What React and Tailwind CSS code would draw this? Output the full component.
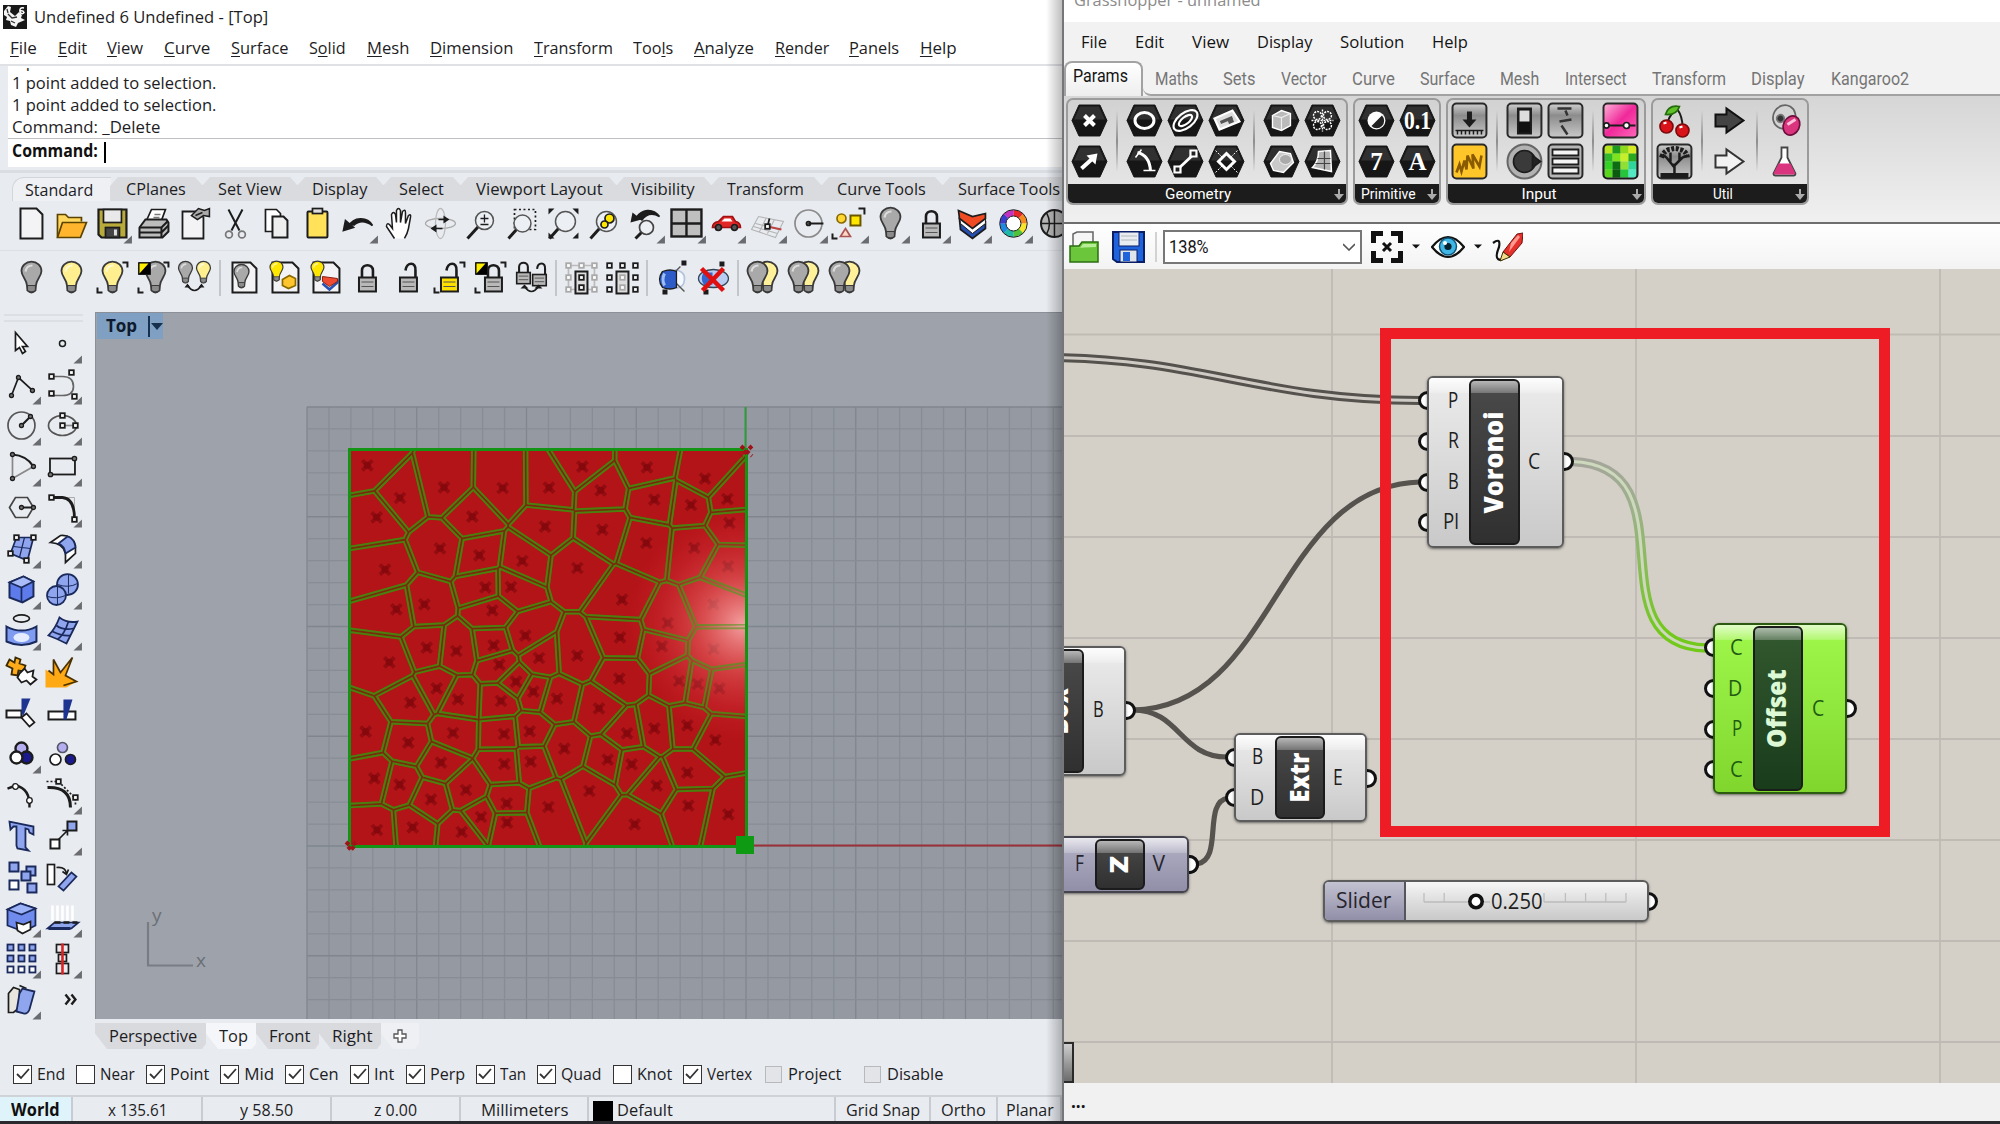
import React, { useLayoutEffect, useRef, useState } from "react";

/* Text squeezed or stretched horizontally to a given width. */
function Fit({ w, children, className = "" }) {
  const ref = useRef(null);
  const [s, setS] = useState(1);
  useLayoutEffect(() => {
    if (ref.current) setS(w / ref.current.offsetWidth);
  }, [w]);
  return (
    <span className={"inline-block shrink-0 whitespace-nowrap " + className} style={{ width: w }}>
      <span ref={ref} className="inline-block origin-left" style={{ transform: `scaleX(${s})` }}>
        {children}
      </span>
    </span>
  );
}

const K = "#1c1c1c";

function Ic({ tri, children }) {
  return (
    <svg viewBox="-20.5 -20.5 41 41" className="h-[41px] w-[40.95px] shrink-0" fill="none" stroke={K} strokeWidth="1.7">
      {children}
      {tri && <path d="M19.500 12v8h-8.500z" fill="#6a6c70" stroke="none" />}
    </svg>
  );
}

/* ---------- glyph pieces ---------- */
const Bulb = ({ x = 0, y = 0, c = "#a9a9a9", s = 1 }) => (
  <g transform={`translate(${x} ${y}) scale(${s})`}>
    <path d="M-4.500 8C-4.500 2-10-1-10-6.500A10 9.500 0 0 1 10-6.500C10-1 4.500 2 4.500 8L4 13Q0 17-4 13Z" fill={c} stroke="#3a3a3a" strokeWidth="1.8" />
    <path d="M-6-6Q-5-12 1-12" stroke="#fff" strokeWidth="2.200" opacity=".6" />
    <path d="M-4 8H4V13Q0 16-4 13Z" fill="#8b8b8b" stroke="#3a3a3a" strokeWidth="1.200" />
  </g>
);
const Lock = ({ x = 0, y = 0, c = "#b9b9b9", open, s = 1 }) => (
  <g transform={`translate(${x} ${y}) scale(${s})`}>
    <path d={open ? "M-3-7C-2-16 8-16 7-7V0" : "M-5.500 1V-7C-5.500-14 5.500-14 5.500-7V1"} strokeWidth="2.600" />
    <rect x="-8.500" y="0" width="17" height="14" fill={c} strokeWidth="2" />
    <path d="M-6 4.500H6M-6 9H6" stroke="#555" strokeWidth="1.200" />
  </g>
);
const Corners = () => <path d="M10-15h5v5M-15 10v5h5" strokeWidth="2" />;
const BW = ({ x, y }) => (
  <g transform={`translate(${x} ${y})`}>
    <path d="M-6-6h12v12h-12z" fill="#000" strokeWidth="1" />
    <path d="M-5-5h9L-5 5z" fill="#ffee00" stroke="none" />
  </g>
);
const Sq = ({ x, y, f = "#fff", r = 2.300, s = K }) => (
  <rect x={x - r} y={y - r} width={r * 2} height={r * 2} fill={f} stroke={s} strokeWidth="1.800" />
);
const Dot = ({ x, y, f = "#777", r = 2 }) => <circle cx={x} cy={y} r={r} fill={f} strokeWidth="1.300" />;
const Page = ({ w = 11, h = 15 }) => (
  <path d={`M${-w}${-h}H${w - 6}L${w}${-h + 6}V${h}H${-w}Z`} fill="#f3f3f5" strokeWidth="2" />
);
const Glass = ({ x = 3, y = -3, f = "#eceff3", r = 9 }) => (
  <g>
    <path d={`M${x - r * 0.7} ${y + r * 0.7}L-14 15`} strokeWidth="3" />
    <circle cx={x} cy={y} r={r} fill={f} stroke="#555" strokeWidth="1.500" />
  </g>
);
const BulbPair = () => (
  <g>
    <Bulb x={5} c="#fff19a" />
    <Bulb x={-5} />
  </g>
);

const rowOne = [
  [0, <Page />],
  [0, <g><path d="M-14 14V-9h8l3 3h13v4" fill="#ffd75e" stroke="#5a4300" /><path d="M-14 14L-9-1H15L9 14Z" fill="#ffb62e" stroke="#5a4300" /></g>],
  [1, <g><path d="M-14-14H14V14H-11L-14 11Z" fill="#b9aa3c" strokeWidth="2.200" /><rect x="-9" y="-14" width="18" height="13" fill="#e9e9e9" /><rect x="-7" y="4" width="14" height="10" fill="#444" /><path d="M3 6v6" stroke="#ddd" strokeWidth="3" /></g>],
  [0, <g><path d="M-7-3L-2-14H12L8-3" fill="#fff" /><path d="M1-9h6M0-6h6" stroke="#777" /><path d="M-14 4L-8-4H13L15-1V8L9 14H-14Z" fill="#bcbcbc" strokeWidth="2" /><path d="M-14 4H8L14-2M-14 9H8L15 2M8 4V14" strokeWidth="2" /></g>],
  [0, <g><path d="M-12-12H4L9-6V15H-12Z" fill="#f3f3f5" strokeWidth="1.800" /><path d="M-3-8L4-15L10-13L15-15V-7L9-8L3-4Z" fill="#aaa" strokeWidth="1.500" /><path d="M1-8L8-11" strokeWidth="1.500" /></g>],
  [0, <g><path d="M-7-14L4 7M7-14L-4 7" strokeWidth="2" /><circle cx="-6.500" cy="11" r="3.400" stroke="#777" /><circle cx="6.500" cy="11" r="3.400" stroke="#777" /></g>],
  [0, <g><path d="M-11-14H0L4-10V8H-11Z" fill="#fff" /><path d="M-4-7H7L11-3V14H-4Z" fill="#eee" strokeWidth="2" /></g>],
  [0, <g><rect x="-10" y="-12" width="20" height="26" rx="1" fill="#ffe25a" strokeWidth="2" /><rect x="-5" y="-15" width="10" height="5" fill="#ddd" /></g>],
  [1, <g><path d="M-10 3C-5-7 9-7 14 2C7-3 0-3-5 2" fill={K} /><path d="M-15 7L-13-3L-5 4Z" fill={K} /></g>],
  [0, <path d="M-5 15L-13 3Q-13-1-10 1L-7 5L-8-9Q-6-13-4-9L-3-1L-3-13Q-1-17 1-13L1-1L3-12Q6-15 6-11L6 0L9-8Q12-10 11-6L9 5Q8 10 5 15" fill="#fff" strokeWidth="1.500" />],
  [0, <g><ellipse rx="15" ry="5" stroke="#aaa" strokeWidth="1.300" /><ellipse rx="5" ry="15" stroke="#bbb" strokeWidth="1.300" /><path d="M-6 5h8M-2-4h6" strokeWidth="1.500" /><path d="M3-8L9-4L3 0ZM-4 1L-4 9L-10 5Z" fill={K} stroke="none" /></g>],
  [0, <g><Glass /><path d="M-1-5H7M3-9V-1M-1 1H7" strokeWidth="1.300" /></g>],
  [0, <g><rect x="-8" y="-14" width="21" height="20" strokeDasharray="2 2.500" /><Glass x={0} y={0} r={8.500} /></g>],
  [0, <g><Glass x={2} y={-2} r={10} /><path d="M-15-15h6l-6 6zM15-15v6l-6-6zM15 15h-6l6-6zM-15 15v-6l6 6z" fill={K} stroke="none" /></g>],
  [0, <g><Glass x={2} y={-2} r={10} /><circle cx="5" cy="-5" r="4.500" fill="#ffe600" /><circle cx="0" cy="1" r="3.500" fill="#ffe600" /></g>],
  [1, <g><path d="M-9-6C-4-14 7-16 14-7C7-11 1-10-4-3" fill={K} /><path d="M-15-1L-13-11L-4-4Z" fill={K} stroke="none" /><path d="M-4 9L-10 15" strokeWidth="3" /><circle cx="1" cy="4" r="7" fill="#eceff3" stroke="#444" /></g>],
  [1, <g><rect x="-15" y="-14" width="30" height="27" fill="#bfbfbf" strokeWidth="2.400" /><path d="M0-14V13M-15 0H15" strokeWidth="2.400" /></g>],
  [1, <g><path d="M-14 4Q-14-1-8-2L-3-7H6L9-2Q14-1 14 4Z" fill="#e32727" stroke="#a01010" /><path d="M-2-5H4L6-2H-5Z" fill="#fff" stroke="none" /><circle cx="-8" cy="4" r="3" fill="#555" /><circle cx="8" cy="4" r="3" fill="#555" /></g>],
  [1, <g><path d="M-16 6L-9-7L16-2L8 14ZM-8 8L-1-6M0 10L7-4M-12 0L12 6M-14 3L10 10" stroke="#b4b4b4" strokeWidth="1.100" /><path d="M0 3L14 6" stroke="#b44" strokeWidth="2" /><path d="M0 3L2-5" /><Sq x={0} y={3} /></g>],
  [1, <g><circle r="13.500" stroke="#8a8a8a" /><circle r="2" fill="#777" /><path d="M0 0H15" strokeWidth="2" /></g>],
  [1, <g><circle cx="-8" cy="-5" r="4.500" fill="#ffd633" stroke="#8a6a00" /><rect x="1" y="-8" width="10" height="10" fill="#ffe600" stroke="#6b5600" strokeWidth="2" /><path d="M-4 5L1 13H-9Z" fill="#ffd9c8" stroke="#a55" /><path d="M9-15h6v6M-17 10v5h5" strokeWidth="2" /></g>],
  [1, <Bulb />],
  [1, <Lock />],
  [1, <g><path d="M-13-4L0 9L13-1V5L0 15L-12 6Z" fill="#254fb0" /><path d="M-13-8L0 4L13-5V0L0 10L-12 0Z" fill="#fff" strokeWidth="1" /><path d="M-14-13L0-7L13-10V-5L0 5L-13-5Z" fill="#ef4a22" /></g>],
  [1, "wheel"],
  [0, <g><circle r="13.500" fill="#b5b5b5" strokeWidth="2" /><path d="M0-13V13M-13 0H13M-8-11Q-2 0-8 11" strokeWidth="1.500" /></g>],
];

const wheelColors = ["#e8262a", "#f58a1f", "#f7e52b", "#4fc13a", "#22b8a6", "#2188e0", "#3b3fd0", "#c331c0"];
const Wheel = () => (
  <g>
    {wheelColors.map((c, i) => (
      <circle key={c} r="10.500" stroke={c} strokeWidth="6" pathLength="8" strokeDasharray="1.02 6.980" transform={`rotate(${i * 45 - 90})`} />
    ))}
    <circle r="13.800" strokeWidth="1" />
    <circle r="7.500" fill="#fff" strokeWidth="1" />
  </g>
);

const rowTwo = [
  [
    <Bulb />,
    <Bulb c="#ffef8e" />,
    <g><Bulb c="#ffef8e" /><Corners /></g>,
    <g><Bulb x={2} /><BW x={-9} y={-9} /><Corners /></g>,
    <g><Bulb x={-9} y={-5} s={0.7} /><Bulb x={9} y={-5} s={0.7} c="#ffef8e" /><path d="M-7 8Q0 18 7 8" /><path d="M-10 10l3-4l3 4zM4 10l3-4l3 4z" fill={K} stroke="none" /></g>,
  ],
  [
    <g><Page w={12} /><Bulb x={-3} y={-1} s={0.75} /></g>,
    <g><Page w={13} /><Bulb x={-9} y={-6} s={0.65} c="#ffe600" /><path d="M-3 2L4-2L10 1V8L3 11L-3 8Z" fill="#ffc52e" stroke="#8a6a00" /></g>,
    <g><Page w={13} /><Bulb x={-9} y={-6} s={0.65} c="#ffe600" /><path d="M-4 6L3 12L11 5L11 2" stroke="#254fb0" strokeWidth="2.500" /><path d="M-4-1L11 1V4L3 9L-4 4Z" fill="#ef4a32" stroke="#8a2010" strokeWidth="1" /></g>,
    <Lock />,
    <Lock open />,
    <g><Lock open c="#ffe100" /><Corners /></g>,
    <g><Lock x={3} /><BW x={-9} y={-9} /><Corners /></g>,
    <g><Lock x={-8} y={-5} s={0.8} /><Lock x={8} y={-3} s={0.8} open /><path d="M-7 9Q0 19 7 9" /><path d="M-11 11l4-4l4 4zM3 11l4-4l4 4z" fill={K} stroke="none" /></g>,
  ],
  [
    <g><path d="M-13-12H13V12H-13Z" stroke="#bbb" />{[-13, 0, 13].map((x) => <Sq key={x} x={x} y={-12} s="#aaa" />)}{[0, 12].map((y) => <g key={y}><Sq x={-13} y={y} s="#aaa" /><Sq x={13} y={y} s="#aaa" /></g>)}<rect x="-6" y="-6" width="12" height="22" fill="#ddd" strokeWidth="2" /><Sq x={0} y={0} /><Sq x={0} y={10} /></g>,
    <g>{[-13, 0, 13].map((x) => <Sq key={x} x={x} y={-12} />)}{[0, 12].map((y) => <g key={y}><Sq x={-13} y={y} /><Sq x={13} y={y} /></g>)}<rect x="-6" y="-6" width="12" height="22" fill="#ddd" strokeWidth="2" /><Sq x={0} y={0} s="#aaa" /><Sq x={0} y={10} s="#aaa" /></g>,
  ],
  [
    <g><path d="M2-8Q13-6 12 2Q12 10 3 11" fill="#f4f8ff" stroke="#b4c4dd" /><path d="M8-11L3-6M3 5L12 14" strokeWidth="1.400" stroke="#555" /><path d="M-10-6Q-2-9 4-6V10Q-2 13-10 10Q-16 2-10-6Z" fill="#2d5cc8" strokeWidth="1.300" /><path d="M-8-4Q-11 2-8 8" stroke="#9dbdf5" strokeWidth="3" /><path d="M9-17h5v5h-5zM-10 12h5v5h-5z" fill={K} stroke="none" /></g>,
    <g><ellipse rx="15" ry="9" cy="1" fill="#b9cdf2" stroke="#345" strokeWidth="1.300" /><path d="M-10-5Q-14 2-9 8L-1 7V-5Z" fill="#3565cf" stroke="none" /><path d="M6-16h5v5h-5zM-10 12h5v5h-5z" fill={K} stroke="none" /><path d="M-12-9L10 13M10-9L-11 13" stroke="#e01010" strokeWidth="4.500" /></g>,
  ],
  [<BulbPair />, <BulbPair />, <BulbPair />],
];

const B = "#8fa5ee";
const D = "#1b2a5c";
const side = [
  [0, <path d="M-6-11V7L-2 4L1 10L4 8L1 3H6Z" fill="#fff" />],
  [1, <circle r="3" strokeWidth="1.500" />],
  [1, <g><path d="M-10 11L-3-7L11 6" /><Dot x={-10} y={11} /><Dot x={-3} y={-7} /><Dot x={11} y={6} /></g>],
  [1, <g><path d="M-11-8H0Q11-8 11 2Q11 11 0 11H-11" stroke="#666" /><Sq x={-11} y={-8} /><Sq x={9} y={-12} /><Sq x={-11} y={9} /><Sq x={12} y={12} /></g>],
  [1, <g><circle r="13.500" stroke="#555" /><path d="M0 0L9-9" strokeWidth="2" /><Dot x={0} y={0} /><Dot x={9} y={-9} /></g>],
  [1, <g><ellipse rx="14" ry="10" stroke="#555" /><path d="M0 0H13" stroke="#888" /><Sq x={0} y={-10} /><Sq x={0} y={0} /><Sq x={13} y={0} /></g>],
  [1, <g><path d="M-9-12V12L12 0" stroke="#888" /><path d="M-9-12Q5-11 12 0" strokeWidth="2.200" /><Dot x={-9} y={-12} /><Dot x={-9} y={12} /><Dot x={12} y={0} /></g>],
  [1, <g><rect x="-12.500" y="-8" width="25" height="16" strokeWidth="1.800" /><Dot x={12} y={-8} r={2.200} /><Dot x={-12} y={8} r={2.200} /></g>],
  [1, <g><path d="M-12 0L-6-10H6L12 0L6 10H-6Z" stroke="#444" /><path d="M0 0H12" strokeWidth="2" /><Dot x={0} y={0} /><Dot x={12} y={0} /></g>],
  [1, <g><path d="M0-10H12V0" stroke="#aaa" strokeWidth="1" /><path d="M-11-10H0Q12-9 12 11" strokeWidth="2.800" /><Sq x={-11} y={-10} /><Sq x={12} y={12} /></g>],
  [1, <g><path d="M-5-11L12-11L6 12L-11 5Z" fill={B} stroke={D} /><path d="M3-11L-2 9M-8-2L9 0" stroke={D} strokeWidth="1.200" /><Sq x={-5} y={-11} /><Sq x={12} y={-11} /><Sq x={-11} y={5} /><Sq x={5} y={12} /></g>],
  [1, <g><path d="M-12-6L-2-13Q10-14 13-3V5L3 14V5Q1-5-12-6Z" fill="#fff" /><path d="M-4-5L5-12Q12-10 13-1L3 5Q2-3-4-5Z" fill={B} stroke={D} /></g>],
  [1, <g><path d="M-12-7L2-13L12-8V7L1 13L-12 8Z" fill="#5d7bea" stroke={D} strokeWidth="2" /><path d="M-12-7L0-2L12-8L2-13Z" fill="#a9bcf8" stroke={D} /><path d="M0-2V13" stroke={D} /></g>],
  [1, <g><circle cx="5" cy="-5" r="10.500" fill={B} stroke={D} strokeWidth="1.800" /><circle cx="-6" cy="6" r="9.500" fill={B} stroke={D} strokeWidth="1.800" /><path d="M-15 7Q-6 10 3 6M-5-4V15M-5-5Q6-1 15-6M6-15V4" stroke={D} strokeWidth="1" /></g>],
  [1, <g><ellipse cx="0" cy="-12" rx="8" ry="3.600" /><path d="M-15-4Q0 4 15-4V11Q0 18-15 11Z" fill="#7f9cf0" stroke={D} strokeWidth="2" /><ellipse cy="7" rx="8" ry="4.500" fill="#e6ecff" stroke="none" /></g>],
  [1, <g><path d="M-3-13Q5-7 15-9L4 13Q-6 8-14 5Q-7-2-3-13Z" fill={B} stroke={D} strokeWidth="1.800" /><path d="M6-9Q2 4-5 9M-6-5Q0 0 11-2M-10 1Q0 6 8 5" stroke={D} /></g>],
  [0, <g><path d="M-15-6L-12-12L-7-9L-6-14L-1-12L-2-8L4-6L2 0L-3-1L-4 4L-10 3L-9-3Z" fill="#ffab1a" stroke="#3a2a00" strokeWidth="1.800" /><path d="M-2 2L3-3L6 1L12-1L11 5L15 8L9 13L5 9L0 11L-4 6Z" fill="#fff" strokeWidth="1.800" /></g>],
  [0, <g><path d="M-17 16V-2L-9 3L-9-12L-2 1L10-14L3 3L14 10L4 16Z" fill="#ffa915" stroke="none" /><path d="M-14-1L-9 3L-9-12L-2 1L10-14L3 4L14 10L1 14" stroke="#4a3100" /></g>],
  [0, <g><rect x="-15" y="-2" width="15" height="7" fill="#fff" strokeWidth="2" /><path d="M0 5L5 1L13 10L8 14Z" fill="#fff" /><path d="M0-14H9L2 3L0 1Z" fill="#1d3590" stroke="none" /></g>],
  [0, <g><rect x="-14" y="-1" width="27" height="8" fill="#fff" strokeWidth="2" /><path d="M1-13H10L4 7H1Z" fill="#1d3590" stroke="none" /></g>],
  [1, <g strokeWidth="2.400"><circle cy="-5" r="6" fill="#b5aef0" /><circle cx="5" cy="4" r="6" fill="#1a1a8c" /><circle cx="-5" cy="4" r="6" fill="#fff" /></g>],
  [0, <g><circle cy="-6" r="5" fill="#b5aef0" stroke="#556" /><circle cx="-7" cy="6" r="5.500" fill="#fff" /><circle cx="8" cy="6" r="5" fill="#1a1a8c" /></g>],
  [0, <g><path d="M-14-6L-6-9Q9-6 8 13" strokeWidth="2.400" /><Dot x={-6} y={-8} r={2.800} f="#fff" /><Dot x={8} y={6} r={2.800} f="#fff" /></g>],
  [1, <g><path d="M-16-13H-4L13 4V12" strokeDasharray="2 2" /><path d="M-15-7Q8-8 8 13" strokeWidth="3" /><Sq x={-4} y={-13} /><Sq x={13} y={3} /></g>],
  [0, <g><path d="M-12-14L12-9V-1L8-3L7-6L4-7L4 12L7 15L-4 13L-5 10V-9L-8-9L-11-6Z" fill={B} stroke={D} strokeWidth="1.800" /></g>],
  [1, <g><path d="M-4 4L5-5M0-5H5V0" /><rect x="5" y="-14" width="9" height="9" fill={B} strokeWidth="2" /><rect x="-12" y="4" width="9" height="9" fill="#fff" strokeWidth="2" /></g>],
  [0, <g strokeWidth="2" stroke={D}><rect x="-12" y="-14" width="9" height="9" fill={B} /><rect x="5" y="-10" width="9" height="9" fill={B} /><rect x="0" y="-5" width="9" height="9" fill={B} /><rect x="-12" y="4" width="9" height="9" fill="#fff" /><rect x="6" y="7" width="9" height="9" fill={B} /></g>],
  [0, <g><rect x="-15" y="-12" width="7" height="20" fill="#fff" /><path d="M-6-9Q3-10 4-3M0-5L4-2L6-7" /><path d="M9-4L14 0L1 14L-4 10Z" fill={B} stroke={D} /></g>],
  [1, <g><path d="M-14-8L-1-14L14-9V8L2 14L-14 8Z" fill="#6f8bed" stroke={D} strokeWidth="1.800" /><path d="M-14-8L0-3L14-9L-1-14Z" fill="#9db3f7" stroke={D} /><path d="M-5 5L2 7L9 4V12L1 16L-4 13Z" fill="#fff" /></g>],
  [1, <g><path d="M-10-12V3M0-12V3M10-12V3M-5-12V3M5-12V3" stroke="#fff" strokeWidth="2.500" /><path d="M-8 5H16L9 11H-15Z" fill={B} stroke={D} /><path d="M-8 5H15" strokeWidth="2.500" strokeDasharray="6 3" /><path d="M-14 11H8" stroke={D} strokeWidth="3" /></g>],
  [1, <g>{[-11, 0, 11].map((y) => [-11, 0, 11].map((x) => <Sq key={x + "_" + y} x={x} y={y} r={3} s={D} f={y === 11 ? "#fff" : B} />))}</g>],
  [1, <g><rect x="-6" y="-14" width="12" height="8" /><rect x="-4" y="-4" width="8" height="7" /><rect x="-6" y="5" width="12" height="10" /><path d="M0-15V16" stroke="#d22" strokeWidth="2.600" /></g>],
  [1, <g><path d="M-13-6L-8-12L-2-10V8L-8 13H-13Z" fill="#e8e6de" /><path d="M-2-14L5-11" /><path d="M1-11L13-8L8 10Q6 15 2 14L-5 12L-2-6Z" fill={B} stroke={D} strokeWidth="1.800" /></g>],
  [0, <path d="M3-5L7 0L3 5M9-5L13 0L9 5" strokeWidth="2.400" />],
];

/* ---------- left window ---------- */
const menu = [
  ["", "F", "ile", 27], ["", "E", "dit", 29], ["", "V", "iew", 36], ["", "C", "urve", 46], ["", "S", "urface", 58], ["S", "o", "lid", 37],
  ["", "M", "esh", 42], ["", "D", "imension", 83], ["", "T", "ransform", 79], ["Too", "l", "s", 40], ["", "A", "nalyze", 60],
  ["", "R", "ender", 54], ["", "P", "anels", 50], ["", "H", "elp", 37],
];
const toolTabs = [
  ["CPlanes", 60, "px-4"], ["Set View", 64, "pl-4 pr-[15px]"], ["Display", 55, "pl-[15px] pr-4"], ["Select", 45, "px-4"],
  ["Viewport Layout", 127, "pl-4 pr-[13px]"], ["Visibility", 64, "pl-[15px] pr-4"], ["Transform", 77, "pl-4 pr-[17px]"],
  ["Curve Tools", 89, "px-4"], ["Surface Tools", 102, "px-4"],
];
const snaps = [
  ["End", 28, 1], ["Near", 35, 0], ["Point", 39, 1], ["Mid", 30, 1], ["Cen", 30, 1], ["Int", 20, 1], ["Perp", 35, 1],
  ["Tan", 26, 1], ["Quad", 41, 1], ["Knot", 35, 0], ["Vertex", 45, 1],
];

/* ---------- Voronoi drawing ---------- */
const seeds = [
  112,106,342,172,210,204,140,262,518,174,657,173,757,110,812,181,951,112,1125,146,973,209,1083,225,1192,207,1198,279,427,260,
  645,290,817,299,949,339,1093,354,1194,409,330,355,448,376,577,393,742,414,165,419,466,472,543,471,283,523,199,538,487,541,
  876,509,1150,523,1013,579,586,617,491,646,627,684,742,677,870,622,996,649,1151,657,379,663,290,653,178,697,508,704,558,755,
  610,785,681,806,868,746,1047,753,1103,762,1168,775,320,775,241,818,384,808,513,813,807,835,107,905,235,938,369,909,522,912,
  599,904,703,956,891,910,973,895,1072,886,1156,930,833,989,905,1003,602,995,523,1002,333,998,133,1045,209,1064,408,1080,
  303,1108,530,1120,453,1161,531,1178,655,1131,778,1083,980,1067,1072,1028,1075,1127,1195,1153,914,1183,141,1200,248,1192,395,1206,
].reduce((a, v, i) => (i % 2 ? a[a.length - 1].push(v / 3 - 20) : a.push([v / 3 - 20]), a), []);

const SIZE = 396;
const GAP = 1.800;
const cells = seeds.map(([x, y], i) => {
  let p = [[0, 0], [SIZE, 0], [SIZE, SIZE], [0, SIZE]];
  seeds.forEach(([u, v], j) => {
    if (i === j) return;
    const l = Math.hypot(u - x, v - y);
    const nx = (u - x) / l;
    const ny = (v - y) / l;
    const c = nx * (x + u) / 2 + ny * (y + v) / 2 - GAP;
    const out = [];
    p.forEach((a, k) => {
      const b = p[(k + 1) % p.length];
      const da = nx * a[0] + ny * a[1] - c;
      const db = nx * b[0] + ny * b[1] - c;
      if (da <= 0) out.push(a);
      if (da * db < 0) {
        const t = da / (da - db);
        out.push([a[0] + (b[0] - a[0]) * t, a[1] + (b[1] - a[1]) * t]);
      }
    });
    p = out;
  });
  return p.map((q) => q[0].toFixed(1) + "," + q[1].toFixed(1)).join(" ");
});

const PITCH = 21.950;
function Viewport() {
  return (
    <div className="relative min-w-0 flex-1 overflow-hidden border-t border-l border-[#8b9098] bg-[#9ea3ab]">
      <svg viewBox="96 313 966 706" className="absolute inset-0 h-[706px] w-[966px]" fill="none">
        <defs>
          <radialGradient id="shine" cx="393" cy="174" r="118" gradientUnits="userSpaceOnUse">
            <stop offset="0" stopColor="#ffb8b8" stopOpacity=".85" />
            <stop offset=".4" stopColor="#f47070" stopOpacity=".5" />
            <stop offset="1" stopColor="#e02030" stopOpacity="0" />
          </radialGradient>
        </defs>
        <rect x="307" y="407" width="760" height="620" fill="#959aa2" />
        {Array.from({ length: 35 }, (_, k) => (
          <path key={k} d={`M${307 + k * PITCH} 407V1020`} stroke={k % 5 ? "#888d95" : "#81868e"} strokeWidth="1.300" />
        ))}
        {Array.from({ length: 28 }, (_, k) => (
          <path key={k} d={`M307 ${407 + k * PITCH}H1062`} stroke={k % 5 ? "#888d95" : "#81868e"} strokeWidth="1.300" />
        ))}
        <path d="M745.500 407V450" stroke="#2f9a3a" strokeWidth="2" />
        <path d="M746 845.500H1062" stroke="#9c3038" strokeWidth="2.200" />
        <g transform="translate(350 450)">
          <rect width="396" height="396" fill="#7a2a0c" />
          {cells.map((p, i) => (
            <polygon key={i} points={p} fill="#b31418" />
          ))}
          {seeds.map(([x, y], i) => (
            <path key={i} d={`M${x - 5} ${y - 5}l10 10m0-10l-10 10`} stroke="#8a0a10" strokeWidth="3.800" opacity=".8" />
          ))}
          {seeds.map(([x, y], i) => (
            <circle key={i} cx={x} cy={y} r="3.600" fill="#7d070c" opacity=".6" />
          ))}
          {cells.map((p, i) => (
            <polygon key={i} points={p} stroke="#4c7206" strokeWidth="1.900" />
          ))}
          <rect width="396" height="396" fill="url(#shine)" />
          {cells.map((p, i) => (
            <polygon key={i} points={p} stroke="#4c8a16" strokeWidth="1.800" opacity=".55" />
          ))}
          <rect x="-.5" y="-.5" width="397" height="397" stroke="#149414" strokeWidth="3" />
        </g>
        <rect x="736" y="836" width="18" height="18" fill="#0f9a14" />
        <path d="M741 446l11 10m0-10l-11 10M346 842l10 9m0-9l-10 9" stroke="#a01218" strokeWidth="4" strokeDasharray="4 3" />
        <path d="M148 922V965.500H193" stroke="#787c83" strokeWidth="2.200" />
      </svg>
      <div className="absolute top-0 left-px flex h-[26px] w-[66px] items-center bg-[#7fa0c2] pl-[9px] text-[17px] font-bold text-[#0e1a2e]">
        <Fit w={31}>Top</Fit>
        <span className="ml-[11px] h-[21px] w-[2px] bg-[#16304e]" />
        <svg viewBox="0 0 12 7" className="ml-px h-[7px] w-3"><path d="M0 0h12L6 7z" fill="#16304e" /></svg>
      </div>
      <span className="absolute top-[588px] left-[56px] text-[19px] text-[#6c7077]">y</span>
      <span className="absolute top-[633px] left-[100px] text-[19px] text-[#6c7077]">x</span>
    </div>
  );
}

function Check({ on, gray }) {
  if (gray) return <span className="size-[17px] border-[1.5px] border-[#b8b9bd] bg-[#e3e4e7]" />;
  return (
    <span className="flex size-[19px] items-center justify-center border-[1.5px] border-[#333] bg-white">
      {on ? <svg viewBox="0 0 16 16" className="size-4"><path d="M2 8l4 4l8-9" fill="none" stroke="#333" strokeWidth="1.800" /></svg> : null}
    </span>
  );
}

const VSep = () => <span className="mx-[3.5px] h-9 w-[2px] shrink-0 bg-[#c3c6cb]" />;

function RhinoWindow() {
  return (
    <div className="relative flex h-full w-[1062px] shrink-0 flex-col overflow-hidden bg-[#e8ebf0] text-[17px] text-[#1d1d24]">
      <div className="flex h-[34px] shrink-0 items-center bg-white pl-[3px]">
        <svg viewBox="0 0 24 24" className="size-6">
          <rect width="24" height="24" fill="#181818" />
          <path d="M1 6L5 1L8 2L7 7L12 11L16 7L19 10L18 13L22 15L15 18L13 22L8 20L7 16L3 15L4 12L1 10Z" fill="#f4f4f4" />
          <path d="M5 9L9 13L14 12M8 16l4 2M4 4l1 4" stroke="#333" fill="none" strokeWidth="1.300" />
          <path d="M21 3Q16 2 17 7Q19 10 21 7.500Q20 5 17 6" stroke="#fff" fill="none" strokeWidth="1.500" />
        </svg>
        <Fit w={234} className="ml-[7px]">Undefined 6 Undefined - [Top]</Fit>
      </div>
      <div className="flex h-[32px] shrink-0 items-center gap-[20.700px] border-b-2 border-[#dfe1e5] bg-white pb-[3px] pl-[10px] leading-[20px]">
        {menu.map(([a, u, b, w]) => (
          <Fit key={u + b} w={w}>{a}<span className="underline decoration-1 underline-offset-2">{u}</span>{b}</Fit>
        ))}
      </div>
      <div className="ml-2 flex h-[73px] shrink-0 flex-col justify-end overflow-hidden border-t-2 border-b border-t-white border-b-[#bfc0c4] bg-white pl-1 leading-[22px]">
        <Fit w={204} className="h-[22px] shrink-0">1 point added to selection.</Fit>
        <Fit w={204} className="h-[22px] shrink-0">1 point added to selection.</Fit>
        <Fit w={204} className="h-[22px] shrink-0">1 point added to selection.</Fit>
        <Fit w={148} className="h-[22px] shrink-0">Command: _Delete</Fit>
      </div>
      <div className="ml-2 flex h-7 shrink-0 items-center bg-white pb-[5px] pl-1 font-bold text-[#101010]">
        <Fit w={86}>Command:</Fit>
        <span className="mt-[3px] ml-[6px] h-[21px] w-[1.5px] bg-black" />
      </div>
      <div className="mt-[3px] h-[3px] shrink-0 bg-[#dadde2]" />
      <div className="mt-[4px] ml-3 flex h-6 shrink-0 items-center">
        <div className="flex h-full items-center rounded-tl-xl border-t border-l border-[#d2d5da] bg-[#eef0f4] pr-[18px] pl-[12px]"><Fit w={68}>Standard</Fit></div>
        {toolTabs.map(([t, w, pad]) => (
          <div key={t} className="-ml-px flex h-full items-center bg-[#d9dbde] [clip-path:polygon(8px_0,calc(100%-8px)_0,100%_9px,100%_100%,0_100%,0_9px)]">
            <div className={"flex h-full items-center border-r border-[#c9cbd0] " + pad}><Fit w={w}>{t}</Fit></div>
          </div>
        ))}
      </div>
      <div className="flex h-[50px] shrink-0 items-center border-b border-[#dcdfe4] pb-[5px] pl-[10.5px]">
        {rowOne.map(([t, g], i) => <Ic key={i} tri={t}>{g === "wheel" ? <Wheel /> : g}</Ic>)}
      </div>
      <div className="flex h-[61px] shrink-0 items-center pb-[8px] pl-[10.5px]">
        {rowTwo.map((g, i) => (
          <React.Fragment key={i}>
            {i > 0 && <VSep />}
            {g.map((x, j) => <Ic key={j}>{x}</Ic>)}
          </React.Fragment>
        ))}
      </div>
      <div className="flex min-h-0 flex-1">
        <div className="w-[95px] shrink-0 pt-[2px]">
          <div className="mx-1 h-[8px] w-[79px] border-y-2 border-[#dcdfe4]" />
          <div className="mt-px ml-px grid w-[82px] grid-cols-2">
            {side.map(([t, g], i) => <Ic key={i} tri={t}>{g}</Ic>)}
          </div>
        </div>
        <Viewport />
      </div>
      <div className="flex h-[37px] shrink-0 items-start pt-[4px] pl-[95px]">
        {[["Perspective", 88, 1, "pl-[14px] pr-[9px]"], ["Top", 29, 0, "pl-[13px] pr-[8px]"], ["Front", 41, 1, "pl-[13px] pr-[9px]"], ["Right", 41, 1, "pl-[13px] pr-[8px]"]].map(([t, w, g, pad]) => (
          <div key={t} className={"flex h-[26px] items-center [clip-path:polygon(0_0,100%_0,100%_80%,calc(100%-4px)_100%,12px_100%,0_40%)] " + (g ? "bg-[#d9dadd] " : "bg-[#f4f6f9] ") + pad}>
            <Fit w={w}>{t}</Fit>
          </div>
        ))}
        <div className="flex h-[26px] w-[38px] items-center justify-center bg-[#eef0f4] [clip-path:polygon(0_0,100%_0,100%_80%,calc(100%-4px)_100%,12px_100%,0_40%)]">
          <svg viewBox="0 0 14 14" className="size-[14px]"><path d="M5 1h4v4h4v4h-4v4h-4v-4h-4v-4h4z" fill="#fff" stroke="#555" strokeWidth="1.300" /></svg>
        </div>
      </div>
      <div className="flex h-[39px] shrink-0 items-center gap-[11.100px] pb-[3px] pl-[13px]">
        {snaps.map(([t, w, on]) => (
          <div key={t} className="flex items-center gap-[5px]"><Check on={on} /><Fit w={w}>{t}</Fit></div>
        ))}
        <div className="ml-[2px] flex items-center gap-[6px]"><Check gray /><Fit w={53}>Project</Fit></div>
        <div className="ml-[12px] flex items-center gap-[6px]"><Check gray /><Fit w={56}>Disable</Fit></div>
      </div>
      <div className="flex h-[26px] shrink-0 items-center border-t-2 border-[#cfd2d7] [&>div]:flex [&>div]:h-full [&>div]:items-center [&>div]:border-r-2 [&>div]:border-[#c8ccd2] [&>div]:pt-[2px]">
        <div className="w-[73px] justify-center bg-[#dff3fa] font-bold text-[#101010]"><Fit w={49}>World</Fit></div>
        <div className="w-[130px] justify-center"><Fit w={59}>x 135.61</Fit></div>
        <div className="w-[129px] justify-center"><Fit w={53}>y 58.50</Fit></div>
        <div className="w-[129px] justify-center"><Fit w={43}>z 0.00</Fit></div>
        <div className="w-[128px] justify-center"><Fit w={87}>Millimeters</Fit></div>
        <div className="w-[247px] pl-[4px]"><span className="mt-px h-[20px] w-5 bg-black" /><Fit w={56} className="ml-[4px]">Default</Fit></div>
        <div className="w-[95px] justify-center"><Fit w={74}>Grid Snap</Fit></div>
        <div className="w-[67px] justify-center"><Fit w={45}>Ortho</Fit></div>
        <div className="w-[64px] pl-[8px]"><Fit w={48}>Planar</Fit></div>
      </div>
      <div className="absolute inset-y-0 right-0 w-4 bg-linear-to-r from-transparent to-black/25" />
    </div>
  );
}

/* ---------- right window ---------- */
const Hex = ({ children }) => (
  <g>
    <path d="M-17.500 0L-10.500-15.500H10.500L17.500 0L10.500 15.500H-10.500Z" fill="#161616" stroke="#161616" strokeWidth="1" strokeLinejoin="round" />
    <path d="M-15.500-1L-9.500-14H9.500L15.500-1Z" fill="#3c3c3c" stroke="none" opacity=".7" />
    <g stroke="#fff" strokeWidth="2.200">{children}</g>
  </g>
);
const Tile = ({ f = "url(#metal)", children }) => (
  <g>
    <rect x="-17" y="-17" width="34" height="34" rx="4" fill={f} strokeWidth="2" stroke="#2a2a2a" />
    {children}
  </g>
);
const HexText = ({ t }) => (
  <Hex>
    <text y="8" textAnchor="middle" fill="#fff" stroke="none" fontFamily="Liberation Serif, serif" fontWeight="bold" fontSize="25" textLength={t.length > 1 ? 27 : undefined} lengthAdjust="spacingAndGlyphs">{t}</text>
  </Hex>
);

const green = ["#b6e61b", "#1d9a1d", "#8fd91b", "#d7ec25", "#30b92b", "#7ee31f", "#c8f02a", "#2aa820", "#35d125", "#0c6d12", "#90df35", "#2fd59a", "#57d81c", "#0a5a10", "#25c53c", "#55e8c5"];
const ribbon = [
  ["Geometry", "w-[282px]", 66, [
    [
      <Hex><path d="M-5-5L5 5M5-5L-5 5" strokeWidth="4" /></Hex>,
      <Hex><path d="M-8 7L2-2" strokeWidth="4" /><path d="M8-8L6 3L-3-6Z" fill="#fff" stroke="none" /></Hex>,
    ],
    [
      <Hex><ellipse rx="9.500" ry="8" strokeWidth="3" /></Hex>,
      <Hex><path d="M-7-9Q5-6 6 9" strokeWidth="3" /><path d="M-1 9H11M-9-4L-3-12" strokeWidth="1.500" /></Hex>,
      <Hex><g transform="rotate(-38)"><ellipse rx="14" ry="7.500" /><ellipse rx="8" ry="3.500" /></g></Hex>,
      <Hex><path d="M-8 8L8-7" strokeWidth="2.800" /><path d="M-11 5h6v6h-6zM5-11h6v6h-6z" fill="#222" /></Hex>,
      <Hex><path d="M-12-2L6-10L13 1L-7 9Z" fill="#ddd" /><path d="M-6 2L6-3M2 2L7 0" stroke="#555" strokeWidth="3" /></Hex>,
      <Hex><path d="M0-8L8 0L0 8L-8 0Z" strokeWidth="3" /><path d="M-11-11L-4-4M11-11L4-4M-11 11L-4 4M11 11L4 4" strokeWidth="1" strokeDasharray="2 1.500" /></Hex>,
    ],
    [
      <Hex><path d="M-9-5L0-10L9-7V5L0 10L-9 7Z" fill="#bbb" strokeWidth="1.400" /><path d="M-9-5L0-3L9-7M0-3V10" stroke="#eee" strokeWidth="1.200" /></Hex>,
      <Hex><path d="M-11 2L-2-10L9-8L12 1L2 11L-8 9Z" fill="#c9c9c9" strokeWidth="1.400" /><ellipse cx="4" cy="-2" rx="6" ry="5" fill="#aaa" stroke="#eee" strokeWidth="1" /></Hex>,
      <Hex><g strokeWidth="1.400" strokeDasharray="2 1"><circle cx="-5" cy="-5" r="4" /><circle cx="5" cy="-5" r="4" /><circle cx="-5" cy="5" r="4" /><circle cx="5" cy="5" r="4" /><path d="M0-11V11M-11 0H11" /></g></Hex>,
      <Hex><path d="M-4-10L8-11L9 10L-10 6Q-4 0-4-10Z" fill="#b5b5b5" strokeWidth="1.500" /><path d="M2-10V8M-5-3H8M-7 2H8" stroke="#444" strokeWidth="1.200" /></Hex>,
    ],
  ]],
  ["Primitive", "w-[88px]", 55, [
    [
      <Hex><circle r="9" fill="#fff" stroke="none" /><path d="M5.500-5A7.300 7.300 0 0 1-5 5.500Z" fill="#222" stroke="none" /></Hex>,
      <HexText t="7" />,
      <HexText t="0.1" />,
      <HexText t="A" />,
    ],
  ]],
  ["Input", "w-[200px]", 35, [
    [
      <Tile><path d="M0-9V0" strokeWidth="5" /><path d="M-7-1H7L0 7Z" fill={K} stroke="none" /><path d="M-14 10H14M-12 10v4M-8 10v4M-4 10v4M0 10v4M4 10v4M8 10v4M12 10v4" strokeWidth="1.500" /></Tile>,
      <Tile f="#ffc629"><path d="M-13 11L-10 3L-8 10L-5-1L-3 8L-2-6L4 7L3-7L10 5L12-6" stroke="#8a5a00" strokeWidth="2.600" /></Tile>,
    ],
    [
      <Tile><rect x="-6.500" y="-12" width="13" height="25" fill="#111" strokeWidth="2" /><rect x="-5" y="-10" width="10" height="11" fill="#ddd" stroke="none" /></Tile>,
      <g><circle r="17" fill="#b2b2b2" stroke="#666" strokeWidth="2" /><circle r="11" fill="#3a3a3a" /><path d="M8-6L16 0L8 6Z" fill="#222" /></g>,
      <Tile><path d="M-8-12H6M0-10L2-5M-6 1L6-1M-4 5L2 14" strokeWidth="2.500" stroke="#333" /></Tile>,
      <Tile f="#b6b6b6"><path d="M-13-12h26v6h-26zM-13-3h26v6h-26zM-13 6h26v6h-26z" fill="#f4f4f4" strokeWidth="1.800" /></Tile>,
    ],
    [
      <Tile f="url(#pink)"><path d="M-15 5H15" strokeWidth="1.800" /><circle cx="-14" cy="5" r="2.600" fill="#fff" /><circle cx="6" cy="5" r="3" fill="#fff" /></Tile>,
      <g>{green.map((c, i) => <rect key={i} x={-16 + (i % 4) * 8} y={-16 + Math.floor(i / 4) * 8} width="8.200" height="8.200" fill={c} stroke="none" />)}<rect x="-17" y="-17" width="34" height="34" rx="4" strokeWidth="2.200" /></g>,
    ],
  ]],
  ["Util", "w-[158px]", 20, [
    [
      <g><path d="M-7 2Q-4-8 3-11Q8-4 8 6" strokeWidth="2" /><path d="M-9-6Q-6-16 5-14Q2-5-9-6Z" fill="#5fc02a" stroke="#256d0c" /><circle cx="-8" cy="6" r="6.500" fill="#d8141a" stroke="#7d0a0c" /><circle cx="8" cy="10" r="6.500" fill="#d8141a" stroke="#7d0a0c" /><path d="M-11 3l3-1M5 7l3-1" stroke="#fff" strokeWidth="2" /></g>,
      <Tile><path d="M-14 14H14" strokeWidth="5" /><path d="M0 14V2M0 6L-8-4M0 4L8-4M-8-4L-12-7M-4 0L-4-9M5-1L5-9M8-4L13-6" strokeWidth="2.500" /><path d="M-13-4q3-8 9-8q5-2 9 0q7 1 8 8" strokeWidth="5" strokeDasharray="3 1.500" /></Tile>,
    ],
    [
      <path d="M-14-6H-3V-12L14 0L-3 12V6H-14Z" fill="#444" stroke="#111" strokeWidth="2" />,
      <path d="M-14-6H-3V-12L14 0L-3 12V6H-14Z" fill="#f2f2f2" stroke="#333" strokeWidth="2" />,
    ],
    [
      <g><ellipse cx="-2" cy="-3" rx="11" ry="12" fill="#d4d4d4" stroke="#666" strokeWidth="1.800" transform="rotate(30)" /><circle cx="-4" cy="-2" r="3.800" fill="#333" stroke="#777" /><ellipse cx="7" cy="5" rx="8" ry="10" fill="#d9347d" stroke="#6d0f3c" transform="rotate(25 7 5)" /><path d="M3 4L11-1" stroke="#ffc0da" strokeWidth="3" /></g>,
      <g><path d="M-3-14H3V-4L11 12Q11 14 9 14H-9Q-11 14-11 12L-3-4Z" fill="#fff" stroke="#444" strokeWidth="1.800" /><path d="M-6 2H6L11 12Q10 13 9 13H-9L-11 12Z" fill="#d9347d" stroke="none" /></g>,
    ],
  ]],
];

const Down = () => <svg viewBox="0 0 10 5" className="h-[5px] w-[8px] shrink-0"><path d="M0 0h10L5 5z" fill="#111" /></svg>;

const OX = 1064;
const OY = 269;
const at = (x, y, w, h) => ({ left: x - OX, top: y - OY, width: w, height: h });
const tones = {
  gray: ["bg-linear-to-b from-[#ececec] to-[#c9c9c9]", "border-[#5c5c5c]", "text-[#1e1e1e]", "from-[#4a4a4a] to-[#303030]", "text-white", "from-white/90"],
  violet: ["bg-linear-to-b from-[#b3b2c6] to-[#918fa8]", "border-[#44434e]", "text-[#26252e]", "from-[#4a4a4a] to-[#303030]", "text-white", "from-white/70"],
  green: ["bg-linear-to-b from-[#a0f84c] to-[#80d62c]", "border-[#2c5a10]", "text-[#1f5c12]", "from-[#33592f] to-[#193c1b]", "text-[#dcf8d4]", "from-white/70"],
};

function Node({ x, y, w, h, cx, cw, name, nw, size = "text-[26px]", ins = [], outs = [], tone = "gray" }) {
  const [bg, border, text, core, coreText, gloss] = tones[tone];
  return (
    <div className="absolute" style={at(x, y, w, h)}>
      {[...ins, ...outs].map(([l, , gy, , side], i) => (
        <span key={i} className="absolute size-[19px] rounded-full border-[3.5px] border-[#111] bg-white" style={{ left: (side ? w : 0) - 9.5, top: gy - y - 9.5 }} />
      ))}
      <div className={"absolute inset-0 overflow-hidden rounded-[6px] border-2 shadow-sm shadow-black/40 " + bg + " " + border}>
        <div className={"absolute inset-x-0 top-0 h-[15px] bg-linear-to-b to-white/20 " + gloss} />
      </div>
      {[...ins, ...outs].map(([l, lx, gy, lw], i) => (
        <span key={i} className={"absolute -mt-[15px] text-[21px] leading-7 " + text} style={{ left: lx - x - lw / 2, top: gy - y }}>
          <Fit w={lw}>{l}</Fit>
        </span>
      ))}
      <div className={"absolute inset-y-[3px] flex items-center justify-center overflow-hidden rounded-[6px] border-2 border-[#1b1b1b] bg-linear-to-b " + core} style={{ left: cx - x, width: cw }}>
        <div className="absolute inset-x-0 top-0 h-[12px] bg-linear-to-b from-white/60 to-white/25" />
        <span className={"mr-[3px] -rotate-90 font-extrabold " + size + " " + coreText}><Fit w={nw}>{name}</Fit></span>
      </div>
    </div>
  );
}

function Canvas() {
  return (
    <div className="relative min-h-0 flex-1 overflow-hidden bg-[#d4d0c8]">
      <svg viewBox="1064 269 936 814" className="absolute top-0 left-0 h-[814px] w-[936px]" fill="none">
        <defs>
          <linearGradient id="wire" x1="1572" y1="461" x2="1640" y2="640" gradientUnits="userSpaceOnUse">
            <stop offset="0" stopColor="#a5a49c" />
            <stop offset=".35" stopColor="#9db08c" />
            <stop offset="1" stopColor="#72c91c" />
          </linearGradient>
          <linearGradient id="metal" x1="0" y1="0" x2="0" y2="1">
            <stop offset="0" stopColor="#cfcfcf" />
            <stop offset=".35" stopColor="#8c8c8c" />
            <stop offset="1" stopColor="#c9c9c9" />
          </linearGradient>
          <linearGradient id="pink" x1="0" y1="0" x2="1" y2="1">
            <stop offset="0" stopColor="#ffb5d9" />
            <stop offset=".5" stopColor="#f0289a" />
            <stop offset="1" stopColor="#ff6bbb" />
          </linearGradient>
        </defs>
        {[1332, 1636, 1940].map((x) => <path key={x} d={`M${x} 269V1083`} stroke="#bfbbb4" strokeWidth="1.800" />)}
        {[334.5, 436, 537, 638, 739, 840, 941, 1042].map((y) => <path key={y} d={`M1064 ${y}H2000`} stroke="#bfbbb4" strokeWidth="1.800" />)}
        <path d="M1050 357.500C1200 358.500 1260 400 1420 400.500" stroke="#55514d" strokeWidth="9" />
        <path d="M1050 357.500C1200 358.500 1260 400 1420 400.500" stroke="#cfcbc4" strokeWidth="3" />
        <g stroke="#56524e" strokeWidth="5.200">
          <path d="M1133 710C1276 708 1275 486 1420 482" />
          <path d="M1133 710C1180 710 1180 757 1227 757" />
          <path d="M1197 864C1224 860 1202 802 1228 798" />
        </g>
        <path d="M1572 461.500C1695 466 1590 644 1706 648" stroke="url(#wire)" strokeWidth="9.500" />
        <path d="M1572 461.500C1695 466 1590 644 1706 648" stroke="#cdd8bd" strokeWidth="3" />
      </svg>
      <div className="absolute border-[11px] border-[#ee1c24]" style={at(1380, 328, 510, 509)} />
      <Node x={1427} y={376} w={137} h={172} cx={1469} cw={51} name="Voronoi" nw={102}
        ins={[["P", 1453, 400.5, 10.5], ["R", 1453, 441, 11], ["B", 1453, 482, 11], ["Pl", 1451, 522, 16]]} outs={[["C", 1534, 461.5, 12, 1]]} />
      <Node x={1713} y={623} w={134} h={171} cx={1753} cw={50} name="Offset" nw={79} tone="green"
        ins={[["C", 1736, 647.7, 12.5], ["D", 1735, 688.7, 14], ["P", 1737, 729.3, 10.5], ["C", 1736, 769.7, 12.5]]} outs={[["C", 1818, 708.7, 12, 1]]} />
      <Node x={960} y={646} w={166} h={130} cx={1034} cw={50} name="Box" nw={46} outs={[["B", 1098, 710, 11, 1]]} />
      <Node x={1234} y={733} w={133} h={89} cx={1275} cw={50} name="Extr" nw={50}
        ins={[["B", 1258, 757, 11.5], ["D", 1257, 797.7, 14]]} outs={[["E", 1338, 778, 10, 1]]} />
      <Node x={1000} y={836} w={189} h={57} cx={1095} cw={50} name="Z" nw={17} tone="violet" size="text-[25px]"
        outs={[["V", 1159, 864, 13, 1], ["F", 1079, 864, 9, 1]]} />
      <div className="absolute" style={at(1323, 880, 326, 42)}>
        <span className="absolute top-[11.500px] -right-[9px] size-[19px] rounded-full border-[3.5px] border-[#111] bg-white" />
        <div className="absolute inset-0 flex overflow-hidden rounded-[6px] border-2 border-[#5c5c5c] bg-linear-to-b from-[#f6f6f6] via-[#dedede] to-[#c9c9c9] shadow-sm shadow-black/40">
          <div className="flex w-[81px] items-center border-r-2 border-[#55545f] bg-linear-to-b from-[#c3c2d2] to-[#918fa8] pl-[11px] text-[21px] text-[#26252e]"><Fit w={55}>Slider</Fit></div>
          <div className="relative flex-1">
            <svg viewBox="0 0 241 38" className="absolute inset-0 h-[38px] w-[241px]" fill="none">
              <path d="M18 20H62M78 20H84M138 20H220" stroke="#bcbcbc" strokeWidth="1.500" />
              {[18, 38.2, 138, 159.4, 179.6, 199.8, 220].map((x) => <path key={x} d={`M${x} 11V20`} stroke="#bebebe" strokeWidth="1.300" />)}
              <circle cx="70" cy="19.500" r="6.200" fill="#fff" stroke="#111" strokeWidth="3.600" />
            </svg>
            <span className="absolute top-[3px] left-[85px] text-[21px] leading-8 text-[#1e1e1e]"><Fit w={52}>0.250</Fit></span>
          </div>
        </div>
      </div>
      <div className="absolute border-2 border-[#2a2a2a] bg-linear-to-b from-[#cfcfcf] to-[#6c6c6c]" style={at(1054, 1042, 20, 41)} />
    </div>
  );
}

function GrasshopperWindow() {
  return (
    <div className="flex h-full min-w-0 flex-1 flex-col border-l-2 border-[#74767a] bg-[#f2f2f2] text-[17px] text-[#141414]">
      <div className="h-[22px] shrink-0 overflow-hidden bg-white pl-[10px] leading-[22px] text-[#8b8b8b]">
        <Fit w={187} className="relative -top-[11px]">Grasshopper - unnamed</Fit>
      </div>
      <div className="flex h-[39px] shrink-0 items-center gap-[28px] pl-[17px]">
        {[["File", 26], ["Edit", 29], ["View", 37], ["Display", 55], ["Solution", 64], ["Help", 36]].map(([t, w]) => <Fit key={t} w={w}>{t}</Fit>)}
      </div>
      <div className="flex h-[35px] shrink-0 font-[Roboto,sans-serif] text-[17.5px]">
        <div className="flex w-[79px] items-center rounded-t-lg border-2 border-b-0 border-[#a2a2a2] bg-linear-to-b from-white to-[#eeeeee] pb-[7px] pl-[7px]"><Fit w={55}>Params</Fit></div>
        <div className="flex flex-1 items-center gap-[25.300px] rounded-bl-lg border-b-2 border-[#a2a2a2] pt-[3px] pl-[12px] text-[#757575]">
          {[["Maths", 43], ["Sets", 32], ["Vector", 46], ["Curve", 43], ["Surface", 55], ["Mesh", 39], ["Intersect", 62], ["Transform", 74], ["Display", 54], ["Kangaroo2", 78]].map(([t, w]) => <Fit key={t} w={w}>{t}</Fit>)}
        </div>
      </div>
      <div className="flex h-[126px] shrink-0 gap-[5px] bg-linear-to-b from-[#d6d6d6] to-[#f0f0f0] pt-[2px] pl-[2px] font-[Roboto,sans-serif]">
        {ribbon.map(([name, width, tw, groups]) => (
          <div key={name} className={"flex h-[107px] shrink-0 flex-col overflow-hidden rounded-[7px] border-2 border-[#9b9b9b] bg-linear-to-b from-[#d2d2d2] to-[#e9e9e9] " + width}>
            <div className="flex flex-1 items-center pb-[2px] pl-px">
              {groups.map((g, i) => (
                <React.Fragment key={i}>
                  {i > 0 && <span className="mx-[6px] h-[62px] w-[2px] shrink-0 bg-linear-to-b from-transparent via-[#8e8e8e] to-transparent" />}
                  <div className="grid grid-flow-col grid-rows-2">{g.map((x, j) => <Ic key={j}>{x}</Ic>)}</div>
                </React.Fragment>
              ))}
            </div>
            <div className="relative -mx-[2px] -mb-[2px] flex h-[21px] shrink-0 items-center justify-center bg-[#1c1c1c] text-[15.500px] text-white">
              <Fit w={tw} className={name === "Primitive" ? "mr-[18px]" : name === "Geometry" ? "mr-[18px]" : "mr-[14px]"}>{name}</Fit>
              <svg viewBox="0 0 10 12" className="absolute right-[4px] h-3 w-[10px]"><path d="M5 0v8" stroke="#aaa" strokeWidth="2" /><path d="M0 5h10L5 11z" fill="#aaa" /></svg>
            </div>
          </div>
        ))}
      </div>
      <div className="flex h-[47px] shrink-0 items-center border-t-2 border-[#6f6f6f] bg-linear-to-b from-white to-[#f3f3f3] pl-[5px]">
        <svg viewBox="0 0 30 32" className="h-8 w-[30px] shrink-0" fill="none" stroke={K} strokeWidth="1.500">
          <path d="M4 20V3l4-2h16v14" fill="#f6f6f6" stroke="#666" />
          <path d="M1 31V15h9l3-4h16v20z" fill="#6cc63c" stroke="#2d6d12" />
          <path d="M3 17h8l3-4h13v3z" fill="#b9ee98" stroke="none" />
        </svg>
        <svg viewBox="0 0 34 32" className="ml-[13px] h-8 w-[34px] shrink-0" fill="none" stroke="#0a1f66">
          <path d="M1 1h31v30H5l-4-3z" fill="#1f63dc" strokeWidth="2" />
          <rect x="7" y="1" width="20" height="14" fill="#e9ecf0" />
          <path d="M9 5h16M9 9h16" stroke="#b4b8be" />
          <rect x="8" y="19" width="17" height="12" fill="#dfe3ea" />
          <rect x="11" y="21" width="7" height="9" fill="#1f63dc" stroke="none" />
        </svg>
        <span className="mr-[6px] ml-[9px] h-[30px] w-[2px] shrink-0 bg-[#d2d2d2]" />
        <div className="flex h-[34px] w-[199px] shrink-0 items-center justify-between border-2 border-[#777] bg-white pr-[5px] pl-[4px] font-[Roboto,sans-serif] text-[18px]">
          <Fit w={40}>138%</Fit>
          <svg viewBox="0 0 12 8" className="h-2 w-3"><path d="M0 1l6 6l6-6" fill="none" stroke="#555" strokeWidth="1.600" /></svg>
        </div>
        <svg viewBox="0 0 32 32" className="ml-[9px] size-8 shrink-0" fill="none" stroke="#111">
          <path d="M2.500 12V2.500H12M20 2.500h9.500V12M29.500 20v9.500H20M12 29.500H2.500V20" strokeWidth="5" />
          <path d="M12 12l8 8m0-8l-8 8" strokeWidth="3" />
        </svg>
        <span className="w-[9px]" /><Down />
        <svg viewBox="0 0 34 24" className="ml-[11px] h-6 w-[34px] shrink-0">
          <path d="M1 12Q9 2 17 2T33 12Q25 22 17 22T1 12Z" fill="#fff" stroke="#111" strokeWidth="2.200" />
          <circle cx="17" cy="11.500" r="8.500" fill="#3fb6e6" stroke="#0d5577" strokeWidth="1.500" />
          <circle cx="17" cy="11.500" r="3.600" fill="#06222e" />
          <circle cx="14" cy="8" r="2" fill="#fff" />
        </svg>
        <span className="w-[9px]" /><Down />
        <svg viewBox="0 0 32 32" className="ml-[9px] size-8 shrink-0" fill="none">
          <path d="M2 12Q10 6 8 16Q4 26 7 28Q10 30 13 27" stroke="#111" strokeWidth="2.200" />
          <path d="M12 21L26 3L32 2L31 12L19 26Z" fill="#e4312b" stroke="#6e1210" />
          <path d="M20 12L27 4L29 6L18 21Z" fill="#ff9a90" />
          <path d="M12 21L19 26L9 30Z" fill="#f2dc8a" stroke="#3d2a00" />
        </svg>
      </div>
      <Canvas />
      <div className="h-[38px] shrink-0 bg-[#f1f1f1] pl-[7px] text-[17px] leading-[38px] font-bold">...</div>
    </div>
  );
}

export default function App() {
  return (
    <div className="flex h-[1124px] w-[2000px] flex-col overflow-hidden bg-[#2a2a2e] font-['Open_Sans',sans-serif]">
      <div className="flex h-[1121px] shrink-0">
        <RhinoWindow />
        <GrasshopperWindow />
      </div>
      <div className="h-[3px] bg-[#2a2a2e]" />
    </div>
  );
}
